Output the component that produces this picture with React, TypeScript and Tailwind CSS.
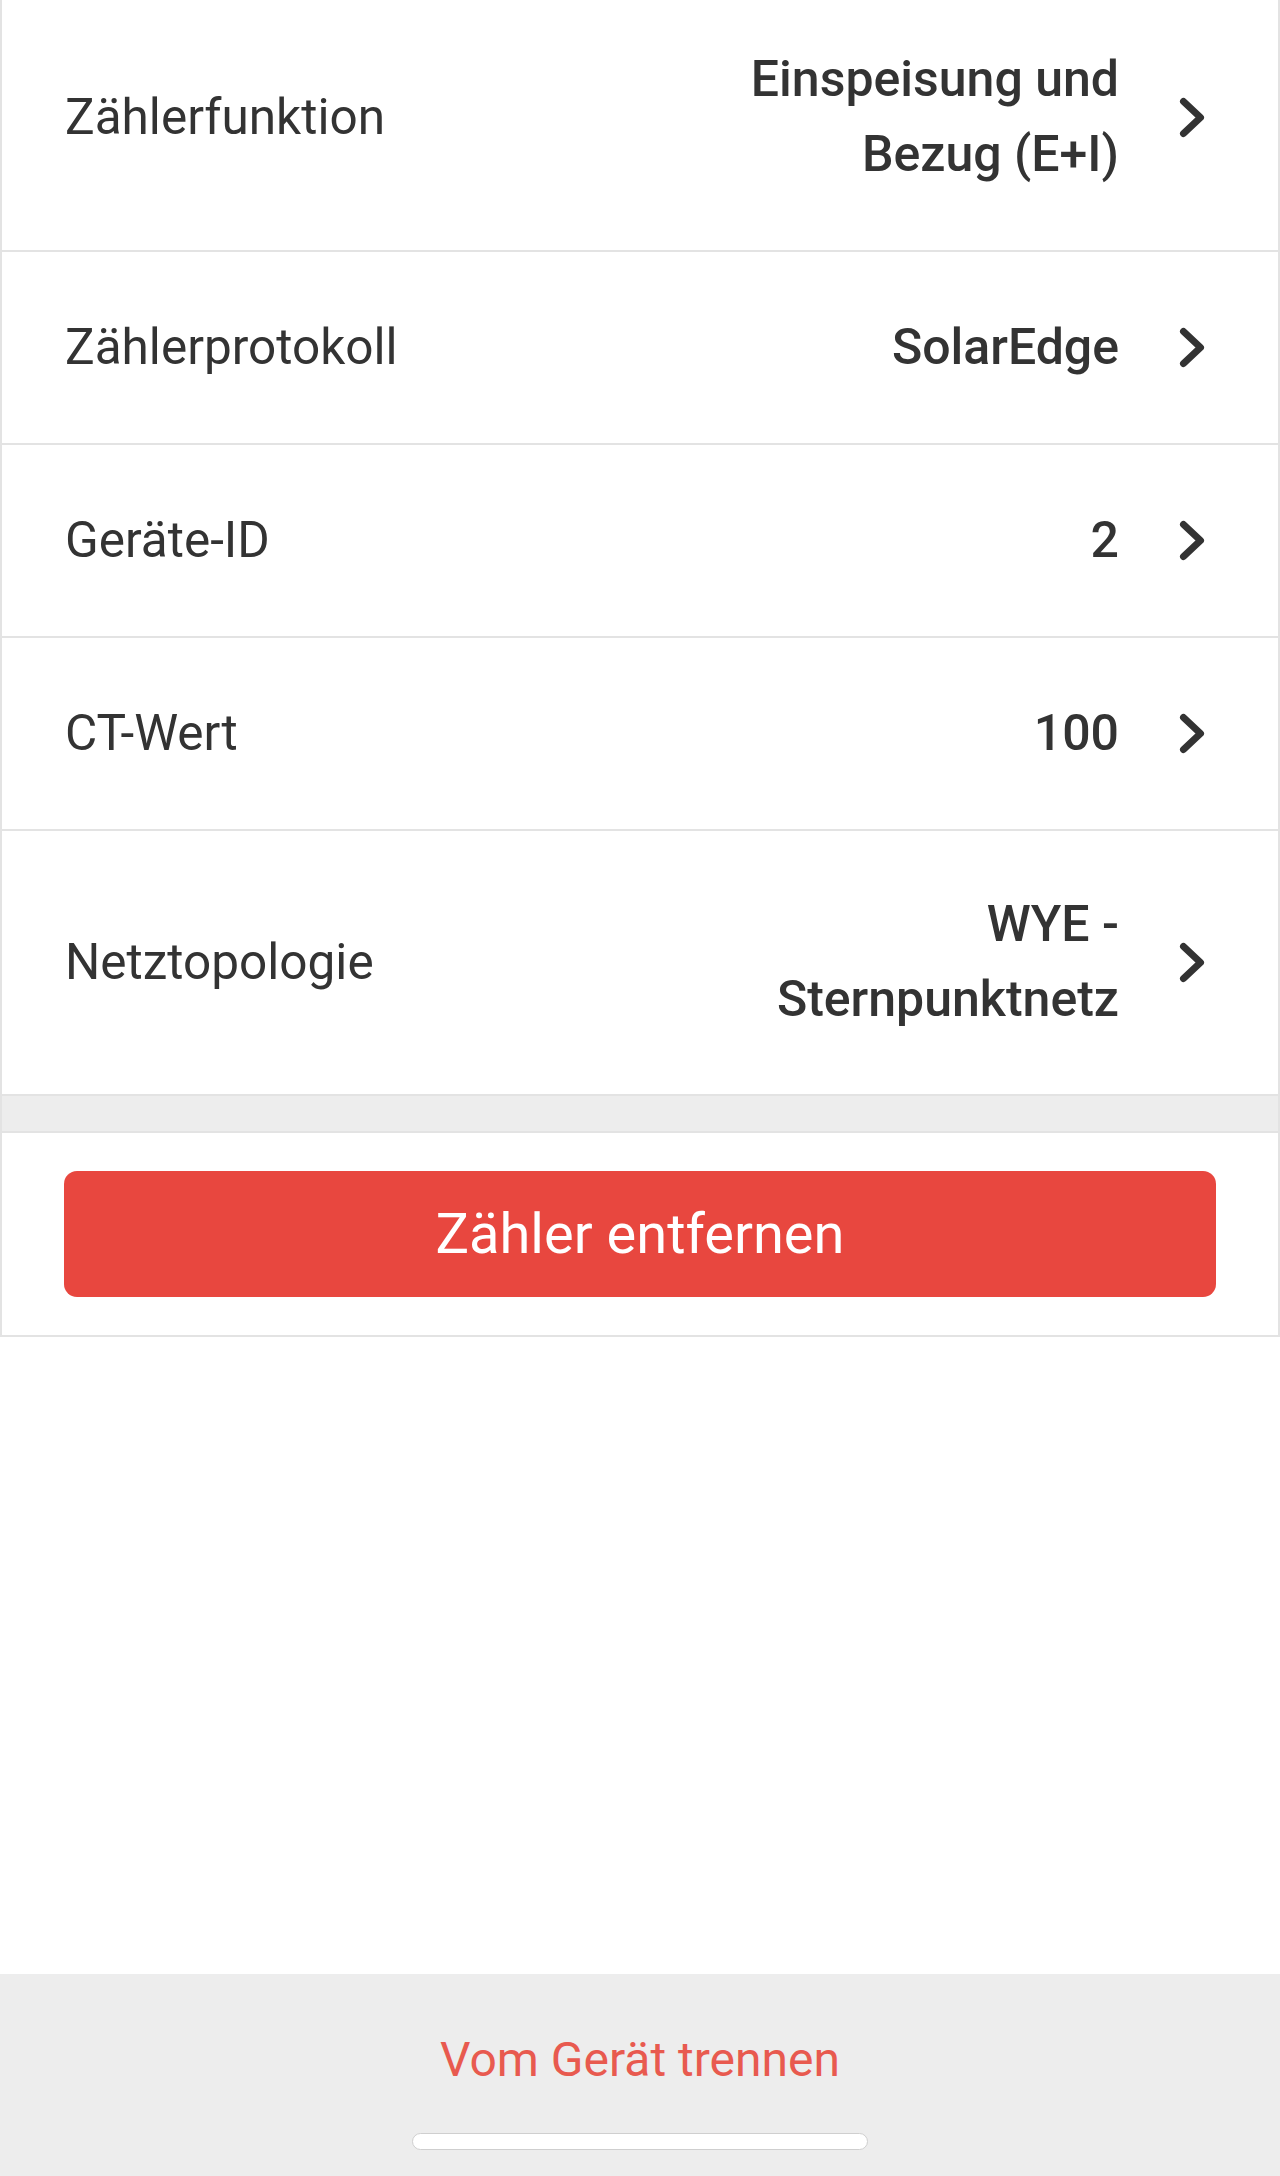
import React from 'react'

const rows = [
	{ label: 'Zählerfunktion', value: 'Einspeisung und Bezug (E+I)', pad: 'pt-[42px] pb-[58px]' },
	{ label: 'Zählerprotokoll', value: 'SolarEdge', pad: 'py-[58px]' },
	{ label: 'Geräte-ID', value: '2', pad: 'py-[58px]' },
	{ label: 'CT-Wert', value: '100', pad: 'py-[58px]' },
	{ label: 'Netztopologie', value: 'WYE - Sternpunktnetz', pad: 'pt-[56px] pb-[57px]' }
]

function Chevron() {
	return (
		<svg width="26" height="41" viewBox="0 0 26 41" fill="none" className="ml-[60px] shrink-0">
			<path d="M4.5 4.5 L21.5 20.5 L4.5 36.5" stroke="#333333" strokeWidth="7" strokeLinecap="round" strokeLinejoin="round" />
		</svg>
	)
}

export default function App() {
	return (
		<div className="flex h-[2176px] flex-col bg-white font-['Roboto','Liberation_Sans',sans-serif] text-[#333333]">
			<div className="border-x-2 border-[#e3e3e3]">
				{rows.map(row => (
					<div
						key={row.label}
						className={`flex items-center border-b-2 border-[#e3e3e3] pl-[63px] pr-[73px] ${row.pad}`}
					>
						<div className="flex-1 text-[49.5px] leading-[75px]">{row.label}</div>
						<div className="max-w-[410px] text-right text-[50px] font-medium leading-[75px]">{row.value}</div>
						<Chevron />
					</div>
				))}
				<div className="h-[37px] border-b-2 border-[#e3e3e3] bg-[#ededed]" />
				<div className="border-b-2 border-[#e3e3e3] px-[62px] py-[38px]">
					<button className="flex h-[126px] w-full items-center justify-center rounded-[13px] bg-[#e8473f] text-[56px] text-white">
						Zähler entfernen
					</button>
				</div>
			</div>
			<div className="flex-1" />
			<footer className="flex h-[202px] flex-col items-center bg-[#ededed] pt-[62px]">
				<div className="text-[48px] leading-[48px] text-[#e85a4f]">Vom Gerät trennen</div>
				<div className="mt-[49px] h-[17px] w-[456px] rounded-full border border-[#cfcfcf] bg-white" />
			</footer>
		</div>
	)
}
